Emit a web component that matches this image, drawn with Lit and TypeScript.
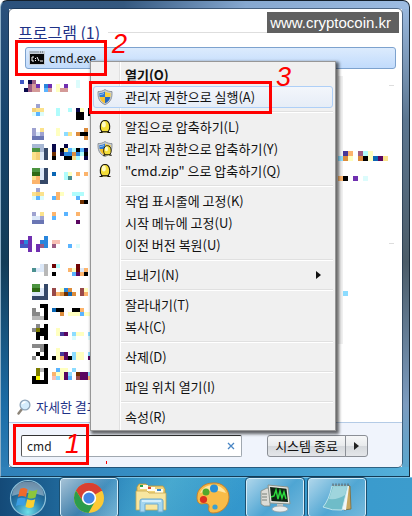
import { LitElement, html, css, svg, nothing } from "lit";
import { customElement } from "lit/decorators.js";

const COLORS: Record<string, string> = {
  K: "#000000", N: "#08084a", B: "#4258c4", b: "#5ab4ff", u: "#2a86dc", U: "#0a66b4",
  P: "#7030b0", M: "#9c5c84", D: "#d49a98", c: "#b0fcfc", C: "#dcfcfc", y: "#ffffc0",
  Y: "#fbe28c", o: "#fcb46c", O: "#dc8c3c", s: "#f4d078", l: "#9ea2d0", L: "#6a76b4",
  a: "#dce8f8", g: "#4c9440", G: "#2f6a14", S: "#354868", h: "#a8b8d4", t: "#4c9090",
  p: "#f8c0b4", R: "#700404", r: "#984848", v: "#5a0660", i: "#483898", w: "#ececec",
  x: "#888888", X: "#b8b8b8", e: "#7c7c00", f: "#f8f800", q: "#8cdcff", n: "#703000",
};

const LIST_CELLS = `
...................
.B.NM..........C...
...MDP.uP.y.P..C...
..NMDD.bD.yDD......
...................
...................
...................
.....l.............
....sYY...c..c.Ny.K
....CbC...c....KK.K
...............KK..
...................
...................
....l.Y...y......O.
....lal...y.qY.OKK.
....LLL..........O.
...................
....hhh..N..N......
....gghS.N.KYbcKbN.
....YsaS.n.NuuOucK.
....YsaS.K..KKYc.N.
...................
...................
....ggaS...........
....GGaS.U..cy.o.o.
....YoaS....ct.....
....ooSS...........
...................
.....l.............
....YsY...oy..ccc..
....CbC..bo....b...
................nK.
...................
...................
....l.Y..o..b..o...
....aal..b.........
....LLL........v...
...................
...................
...................
...P...u...........
.PuP..uu.pp........
.BBP.PMu.M...b.C...
...P.P.............
...................
...................
...................
......aX.Rc....R...
....taaX.....oyRao.
.......X.K....bvoK.
...................
...................
....gg.S...........
....GGaS.r.yuO..ry.
....aaaS.roOnUO.ro.
....SSSS...........
...................
......KK...........
....x..K.UKK..KKo..
....xx.K...O.yyybyy
....XXXK...........
...................
.....x.K...........
....xeKK..y........
.....KKK..yiv.qyy.q
.....K.K......C...C
...................
....xxxK...........
......xK..y........
.....K.K..yiv.qyy.q
....x.KK.KyovKqyy.v
...................
...................
.....eXK..byy.q....
.....e.K.oyyvq.nvvq
....Kf.K.pqyvb.rvvo
....KKKK...........
`.trim().split("\n");

const SIDE_CELLS = [
  { y: 75, cells: ".io.Mcy..." },
  { y: 80, cells: "qOy.OKyUvY" },
  { y: 100, cells: "oK.P.C...." },
  { y: 215, cells: ".q........" },
];

const cellRow = (row: string, y: number, size: number) =>
  [...row].map((c, x) =>
    COLORS[c] ? svg`<rect x=${x * size} y=${y} width=${size} height=${size} fill=${COLORS[c]} />` : nothing
  );

const shieldShapes = svg`
  <path d="M8 .5 C6 2 3.5 2.6 1 2.6 C.8 8 1.5 13 8 15.6 C14.5 13 15.2 8 15 2.6 C12.500 2.600 10 2 8 .5Z" fill="#c9cdd2" stroke="#7c848c" stroke-width=".8"/>
  <path d="M8 2.500 V8 H2.600 C2.400 6.500 2.400 5.300 2.500 4.100 C4.500 4 6.500 3.500 8 2.500Z" fill="#2f78d0"/>
  <path d="M8 2.500 V8 H13.400 C13.600 6.500 13.600 5.300 13.500 4.100 C11.500 4 9.500 3.500 8 2.500Z" fill="#fbd03a"/>
  <path d="M8 8 H2.600 C3.200 11 5 13 8 14.200Z" fill="#f5c02c"/>
  <path d="M8 8 H13.400 C12.800 11 11 13 8 14.200Z" fill="#2668bd"/>
  <path d="M3 5 Q5 4.800 7 4 V5 Q5 6 3 6Z" fill="#8fc0f4"/>`;
const eggShapes = svg`
  <path d="M2.500 13.500 H5 L4.500 12 Q3 10 3.300 7 Q4 1.500 8 1.500 Q12 1.500 12.700 7 Q13 10 11.500 12 L11 13.500 H13.500" fill="#f4de38" stroke="#15120a" stroke-width="1.100"/>
  <path d="M4.500 12.800 H11.500" stroke="#15120a" stroke-width="1.200"/>
  <ellipse cx="6.800" cy="5.500" rx="2" ry="3" fill="#fffbc4"/>`;
const icons: Record<string, unknown> = {
  shield: html`<svg viewBox="0 0 16 16" width="16" height="16">${shieldShapes}</svg>`,
  egg: html`<svg viewBox="0 0 16 16" width="16" height="16">${eggShapes}</svg>`,
  both: html`<svg viewBox="0 0 16 16" width="16" height="16">${shieldShapes}<g transform="translate(4 3.500) scale(.8)">${eggShapes}</g></svg>`,
};

type Item = { label: string; icon?: string; bold?: boolean; hot?: boolean; sub?: boolean };
const GROUPS: Item[][] = [
  [{ label: "열기(O)", bold: true }, { label: "관리자 권한으로 실행(A)", icon: "shield", hot: true }],
  [
    { label: "알집으로 압축하기(L)", icon: "egg" },
    { label: "관리자 권한으로 압축하기(Y)", icon: "both" },
    { label: "\"cmd.zip\" 으로 압축하기(Q)", icon: "egg" },
  ],
  [{ label: "작업 표시줄에 고정(K)" }, { label: "시작 메뉴에 고정(U)" }, { label: "이전 버전 복원(U)" }],
  [{ label: "보내기(N)", sub: true }],
  [{ label: "잘라내기(T)" }, { label: "복사(C)" }],
  [{ label: "삭제(D)" }],
  [{ label: "파일 위치 열기(I)" }],
  [{ label: "속성(R)" }],
];

@customElement("context-menu")
export class ContextMenu extends LitElement {
  static styles = css`
    :host {
      display: block; box-sizing: border-box; padding: 2px; border: 1px solid #979797;
      background: linear-gradient(90deg, #f1f1f1 28px, #e0e0e0 28px, #e0e0e0 29px, #ffffff 29px, #ffffff 30px, #f0f0f0 30px);
      box-shadow: 2px 2px 3px 1px rgba(0, 0, 0, 0.6);
    }
    .item {
      display: flex; align-items: center; gap: 12px; box-sizing: border-box; width: 100%; height: 22px;
      padding: 0 11px 0 3px; border: 1px solid transparent; border-radius: 3px; background: none;
      font: inherit; color: #111; text-align: left; white-space: nowrap;
    }
    .hot { border-color: #aecff7; background: linear-gradient(#f3f6fb, #e6edf7); }
    .bold { font-weight: 700; }
    .icon { width: 16px; height: 16px; flex: none; }
    .icon svg { display: block; }
    .label { flex: 1; }
    .separator { height: 1px; margin: 3px 0 3px 28px; border: 0; border-bottom: 1px solid #fff; background: #e0e0e0; }
  `;
  render() {
    return GROUPS.map((group, i) => html`
      ${i ? html`<hr class="separator" />` : nothing}
      ${group.map((it) => html`
        <button class="item ${it.hot ? "hot" : ""} ${it.bold ? "bold" : ""}" role="menuitem">
          <span class="icon">${it.icon ? icons[it.icon] : nothing}</span>
          <span class="label">${it.label}</span>
          ${it.sub ? html`<svg width="5" height="8" viewBox="0 0 5 8"><path d="M0 0L5 4L0 8Z" fill="#111"/></svg>` : nothing}
        </button>`)}
    `);
  }
}

@customElement("task-bar")
export class TaskBar extends LitElement {
  static styles = css`
    :host {
      display: flex; gap: 4px; height: 39px; border-top: 1px solid #7cc4e8;
      background:
        linear-gradient(120deg, transparent 90px, rgba(120, 220, 230, 0.35) 150px, transparent 220px),
        linear-gradient(90deg, #144a78, #2b86bd 30%, #3498cd 60%, #3c9ccd);
    }
    .slot {
      display: flex; align-items: center; justify-content: center; box-sizing: border-box; width: 58px;
      padding: 0; border: 1px solid transparent; border-radius: 3px; background: none;
    }
    .start { width: 56px; }
    .open {
      border-color: #d4ecf8; outline: 1px solid #1d5070; outline-offset: 0;
      background: linear-gradient(135deg, rgba(255, 255, 255, 0.6), rgba(255, 255, 255, 0.12) 55%, rgba(255, 255, 255, 0.3));
    }
  `;
  render() {
    return html`
      <button class="slot start" aria-label="시작">
        <svg width="38" height="38" viewBox="0 0 38 38">
          <defs><radialGradient id="orb" cx=".5" cy=".9" r=".9"><stop offset="0" stop-color="#6fe0e8"/><stop offset=".45" stop-color="#2a7fb0"/><stop offset="1" stop-color="#123f68"/></radialGradient></defs>
          <circle cx="19" cy="19" r="17.500" fill="url(#orb)" stroke="#8fc4dc" stroke-width="1.200"/>
          <path d="M3 17 Q4 3 19 2.500 Q34 3 35 17 Q19 11 3 17Z" fill="#fff" opacity=".38"/>
          <path d="M11 10 Q14.500 8 18.500 10.300 L17 18 Q13 16 9 18Z" fill="#ef6a2c"/>
          <path d="M20 11 Q24 13 28.500 10.500 L26.500 18.500 Q22.500 20.500 18.500 18.700Z" fill="#8cc63c"/>
          <path d="M8.600 19.500 Q12.500 17.800 16.700 19.600 L15 27 Q11 25.200 7 27Z" fill="#3c9ee4"/>
          <path d="M18.200 20.300 Q22 22 26.200 20.200 L24.500 28 Q20.500 30 16.500 27.700Z" fill="#fcd030"/>
        </svg>
      </button>
      <button class="slot open" aria-label="Chrome">
        <svg width="32" height="32" viewBox="0 0 32 32">
          <circle cx="16" cy="16" r="15" fill="#fcc934"/>
          <path d="M16 16 L3 8.500 A15 15 0 0 1 29 8.500Z" fill="#d93f31"/>
          <path d="M16 9 H29.300 A15 15 0 0 0 3 8.500 L9.900 19.500Z" fill="#d93f31"/>
          <path d="M3 8.500 A15 15 0 0 0 15.500 31 L22 19.500 L16 22 L9.900 19.500Z" fill="#2c9c4b"/>
          <circle cx="16" cy="16" r="7.200" fill="#fff"/><circle cx="16" cy="16" r="5.600" fill="#4285e4"/>
        </svg>
      </button>
      <button class="slot" aria-label="탐색기">
        <svg width="34" height="32" viewBox="0 0 34 32">
          <path d="M3 5 L5 2 H12 L14 4 H29 L31 7 V27 H3Z" fill="#eed37a" stroke="#b8963c" stroke-width=".8"/>
          <path d="M6 3 h8 v4 h-8z M13 5 h8 v4 h-8z M21 7 h8 v4 h-8z" fill="#fffdf0"/>
          <path d="M6 3h3v2h-3z" fill="#28a048"/><path d="M14 5h3v2h-3z" fill="#d84830"/><path d="M23 7h4v2h-4z" fill="#3888d0"/>
          <path d="M2 9 H13 L15 11 H32 V28 H2Z" fill="#f8e6a0" stroke="#c8a850" stroke-width=".8"/>
          <path d="M6 19 Q6 17 8 17 H27 Q29 17 29 19 V30 H24 V22 H11 V30 H6Z" fill="#a4d6f0" stroke="#68a8d0"/>
          <path d="M8 19 H27" stroke="#e4f6ff" stroke-width="1.500"/>
        </svg>
      </button>
      <button class="slot" aria-label="그림판">
        <svg width="34" height="34" viewBox="0 0 34 34">
          <path d="M17 2 C26 1 33 8 33 16 C33 25 26 32 17 32 C13 32 12 29 13 26 C13 22 10 22 6 23 C2 23 1 20 1 16 C1 8 8 2 17 2Z" fill="#f9bc48" stroke="#c8812a"/>
          <path d="M4 12 Q8 4 17 4 Q26 4 30 12 Q18 7 4 12Z" fill="#ffe6a0"/>
          <circle cx="18" cy="7.500" r="4" fill="#2b8fd4"/><circle cx="10" cy="11" r="3.500" fill="#52a82c"/>
          <circle cx="7.500" cy="18.500" r="3.600" fill="#dc3020"/><circle cx="19" cy="26" r="2.600" fill="#3ca0d0"/>
        </svg>
      </button>
      <button class="slot open" aria-label="작업 관리자">
        <svg width="34" height="32" viewBox="0 0 34 32">
          <path d="M3 9 L9 6 L12 7 V24 L6 24 L3 22Z" fill="#dcdcd6" stroke="#808880" stroke-width=".8"/>
          <path d="M4 12h5M4 15h5M4 18h5" stroke="#788078"/>
          <path d="M10 3 L30 5 L32 22 L12 21Z" fill="#e4e4de" stroke="#8c948c"/>
          <path d="M12 5 L28.500 6.800 L30 20 L13.500 19Z" fill="#102414"/>
          <path d="M13 15 L16 14 L18 8 L20 17 L22 9 L24 16 L26 10 L28 17" fill="none" stroke="#2cd83c" stroke-width="1.500"/>
          <path d="M19 22 h6 v4 h-6z" fill="#c4c8c8"/><ellipse cx="22" cy="27" rx="8" ry="3" fill="#e8ecec" stroke="#98a0a0" stroke-width=".8"/>
        </svg>
      </button>
      <button class="slot open" aria-label="메모장">
        <svg width="32" height="32" viewBox="0 0 32 32">
          <path d="M12 4 H29 L30 27 L23 28Z" fill="#c9a860" stroke="#7c6838" stroke-width=".8"/>
          <path d="M11 4 H28 L25 28 L16 27Z" fill="#f2f6f6"/>
          <path d="M11 4 H27 L21 28 Q11 29 2 25 Q8 18 11 4Z" fill="#6fbcc8" stroke="#d0eef2" stroke-width=".8"/>
          <path d="M12 5 H26 L24 13 Q17 18 8 17Z" fill="#b4e0e6" opacity=".7"/>
          <path d="M12 4V1.500M15 4V1.500M18 4V1.500M21 4V1.500M24 4V1.500M27 4V1.500" stroke="#586870" stroke-width="1.200"/>
        </svg>
      </button>
    `;
  }
}

@customElement("app-root")
export class AppRoot extends LitElement {
  static styles = css`
    :host {
      display: flex; flex-direction: column; min-height: 100vh; background: #fff; overflow: hidden;
      font: 13px/20px "Noto Sans CJK KR", sans-serif; color: #111;
    }
    .frame {
      position: relative; flex: 1; display: flex; box-sizing: border-box; margin-right: 2px; padding: 8px 7px 9px 8px;
      border-top: 1px solid #14202c; border-left: 1px solid #8fb0c8; border-right: 1px solid #1c2a38; border-bottom: 1px solid #143a54;
      border-radius: 7px 7px 0 0;
      background:
        linear-gradient(90deg, #2f80b8, #3b98cc 60%, #55b0da) bottom / 100% 9px no-repeat,
        linear-gradient(90deg, #2b517c, #34587f 30%, #86a8d0 60%, #9dbce2) top / 100% 8px no-repeat,
        linear-gradient(#2b517c, #17456d 25%, #133c58 55%, #1b6ca6 85%, #2f80b8) left / 8px 100% no-repeat,
        linear-gradient(#9dbce2, #5c7690 25%, #4c5c68 55%, #7c9cc0 85%, #55a8d0) right / 7px 100% no-repeat;
    }
    .panel {
      flex: 1; min-width: 0; display: flex; flex-direction: column; border-radius: 5px; background: #fff;
      box-shadow: 0 0 0 1px rgba(20, 40, 64, 0.55); 
    }
    .heading { display: flex; align-items: center; gap: 8px; margin: 11px 9px 3px; font: 16px/24px "Noto Sans CJK KR", sans-serif; color: #1e3287; }
    .rule { flex: 1; height: 1px; background: #dedede; }
    .result {
      position: relative; display: flex; align-items: center; gap: 3px; box-sizing: border-box; height: 22px;
      margin: 0 6px 7px 16px; padding: 0 3px; border: 1px solid #7da2ce; border-radius: 3px;
      background: linear-gradient(#dcebfd, #c1dbfc); font: inherit; font-size: 12px; color: #111;
    }
    .blurred { flex: 1; display: flex; justify-content: space-between; align-items: flex-start; padding: 0 7px; }
    .more { display: flex; align-items: center; gap: 5px; height: 22px; margin: 8px 8px 4px; color: #1e3287; text-decoration: none; }
    .footer {
      position: relative; display: flex; align-items: center; gap: 25px; box-sizing: border-box; height: 45px; padding: 1px 34px 0 12px;
      border-top: 1px solid #b4cbe6; border-radius: 0 0 5px 5px; background: #f0f4fc;
    }
    .search {
      flex: 1; display: flex; align-items: center; box-sizing: border-box; height: 22px; min-width: 0; padding: 0 6px 0 5px;
      border: 1px solid #a0a8b0; border-top-color: #333; border-left-color: #555; border-radius: 2px; background: #fff;
    }
    .field { flex: 1; min-width: 0; padding: 0; border: 0; outline: 0; background: none; font: inherit; font-size: 12px; color: #222; }
    .clear { display: flex; padding: 0; border: 0; background: none; }
    .power { display: flex; height: 22px; }
    .key {
      display: flex; align-items: center; justify-content: center; box-sizing: border-box; width: 79px; padding: 0;
      border: 1px solid #8b8f96; border-radius: 3px 0 0 3px; font: inherit; color: #111; white-space: nowrap;
      background: linear-gradient(#f6f7f8, #e9ebed 48%, #d5d8dc 50%, #e4e6e9);
    }
    .arrow { width: 23px; margin-left: -1px; border-radius: 0 3px 3px 0; }
    .menu { position: absolute; z-index: 2; top: 60px; left: 89px; width: 246px; }
    .stamp {
      position: absolute; top: 11px; right: 10px; padding: 0 8px 0 3px;
      background: #606060; color: #fff; font: 15px/21px "Liberation Sans", sans-serif;
    }
    .mark { position: absolute; z-index: 3; box-sizing: border-box; border: 3px solid #f00; pointer-events: none; }
    .digit { position: absolute; font: italic 27px/27px "Liberation Sans", sans-serif; color: #f00; }
    .mark-search { left: 4px; top: 1px; width: 76px; height: 41px; }
    .mark-search .digit { left: 49px; top: 4px; }
    .mark-result { left: -11px; top: -8px; width: 92px; height: 36px; }
    .mark-result .digit { left: 94px; top: -12px; }
    .mark-run { left: 88px; top: 80px; width: 183px; height: 33px; }
    .mark-run .digit { left: 184px; top: -20px; }
    .speck { position: absolute; z-index: 3; left: 97px; bottom: 3px; width: 1px; height: 3px; background: #f00; }
  `;
  render() {
    return html`
      <div class="frame">
        <main class="panel">
          <div class="heading"><span>프로그램 (1)</span><span class="rule"></span></div>
          <button class="result">
            <svg width="17" height="14" viewBox="0 0 17 14">
              <path d="M0 0H16V14H0Z" fill="#c4ccd4"/><path d="M1 3H15V13H1Z" fill="#080808"/>
              <path d="M1 1H10" stroke="#8494a4"/><path d="M11 1h1M13 1h1" stroke="#465868"/>
              <path d="M5 6H3V10H5M6.500 7v1M6.500 9v1M8 6L10 10M11 10H14" stroke="#fff" fill="none"/>
            </svg>
            <span>cmd.exe</span>
            <span class="mark mark-result"><span class="digit">2</span></span>
          </button>
          <div class="blurred">
            <svg width="76" height="312" shape-rendering="crispEdges" aria-hidden="true">
              ${LIST_CELLS.map((row, y) => cellRow(row, y * 4, 4))}
            </svg>
            <svg width="57" height="312" shape-rendering="crispEdges" aria-hidden="true">
              <rect width="5" height="268" fill="#f0f0f0"/>
              <rect x="51" y="9" width="5" height="1" fill="#ddd"/><rect x="51" y="167" width="5" height="1" fill="#ddd"/>
              ${SIDE_CELLS.map((r) => cellRow(r.cells, r.y, 5))}
            </svg>
          </div>
          <a class="more" href="#">
            <svg width="14" height="16" viewBox="0 0 14 16">
              <path d="M5 10 L1.500 14.500" stroke="#8c8478" stroke-width="2.400" stroke-linecap="round"/>
              <circle cx="8" cy="6" r="4.900" fill="#d4ecfc" stroke="#8ea4b8" stroke-width="1.300"/>
              <path d="M5 5 Q6 3 8.500 3" stroke="#fff" stroke-width="1.300" fill="none"/>
            </svg>
            <span>자세한 결과 보기</span>
          </a>
          <div class="footer">
            <div class="search">
              <input class="field" type="text" aria-label="검색" .value=${"cmd"} />
              <button class="clear" aria-label="지우기">
                <svg width="8" height="8" viewBox="0 0 8 8"><path d="M1 1L7 7M7 1L1 7" stroke="#4a86c4" stroke-width="1.300"/></svg>
              </button>
            </div>
            <div class="power">
              <button class="key">시스템 종료</button>
              <button class="key arrow" aria-label="전원 옵션">
                <svg width="5" height="8" viewBox="0 0 5 8"><path d="M0 0L5 4L0 8Z" fill="#222"/></svg>
              </button>
            </div>
            <span class="mark mark-search"><span class="digit">1</span></span>
            <span class="speck"></span>
          </div>
        </main>
        <div class="stamp">www.cryptocoin.kr</div>
        <context-menu class="menu" role="menu"></context-menu>
        <span class="mark mark-run"><span class="digit">3</span></span>
      </div>
      <task-bar></task-bar>
    `;
  }
}
